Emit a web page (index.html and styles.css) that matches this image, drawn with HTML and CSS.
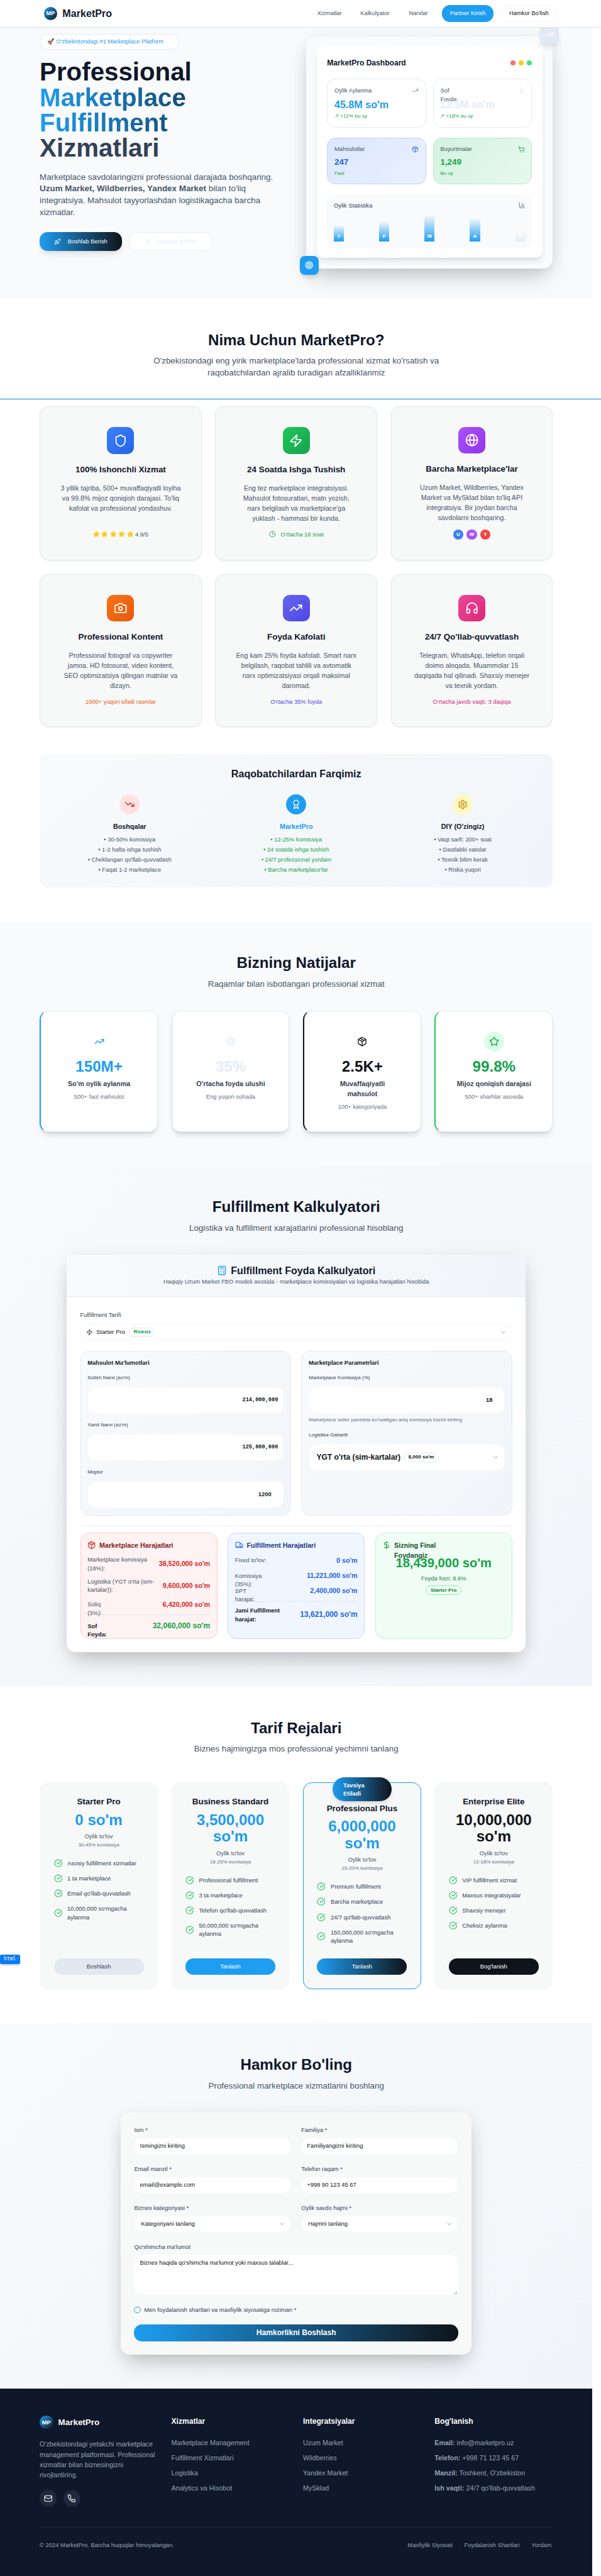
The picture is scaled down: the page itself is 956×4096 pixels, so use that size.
FILE: index.html
```html
<!DOCTYPE html>
<html lang="uz">
<head>
<meta charset="utf-8">
<title>MarketPro</title>
<link rel="stylesheet" href="styles.css">
</head>
<body>
<svg class="sprite" width="0" height="0" aria-hidden="true">
  <symbol id="rocket" viewBox="0 0 24 24"><path d="M4.5 16.5c-1.5 1.26-2 5-2 5s3.74-.5 5-2c.71-.84.7-2.13-.09-2.91a2.18 2.18 0 0 0-2.91-.09z"/><path d="m12 15-3-3a22 22 0 0 1 2-3.95A12.88 12.88 0 0 1 22 2c0 2.72-.78 7.5-6 11a22.35 22.35 0 0 1-4 2z"/><path d="M9 12H4s.55-3.03 2-4c1.62-1.08 5 0 5 0"/><path d="M12 15v5s3.03-.55 4-2c1.08-1.62 0-5 0-5"/></symbol>
  <symbol id="users" viewBox="0 0 24 24"><path d="M16 21v-2a4 4 0 0 0-4-4H6a4 4 0 0 0-4 4v2"/><circle cx="9" cy="7" r="4"/><path d="M22 21v-2a4 4 0 0 0-3-3.87"/><path d="M16 3.13a4 4 0 0 1 0 7.75"/></symbol>
  <symbol id="up" viewBox="0 0 24 24"><path d="M22 7 13.5 15.5 8.500 10.500 2 17"/><path d="M16 7h6v6"/></symbol>
  <symbol id="down" viewBox="0 0 24 24"><path d="M22 17 13.5 8.500 8.500 13.500 2 7"/><path d="M16 17h6v-6"/></symbol>
  <symbol id="dollar" viewBox="0 0 24 24"><path d="M12 2v20"/><path d="M17 5H9.500a3.500 3.500 0 0 0 0 7h5a3.500 3.500 0 0 1 0 7H6"/></symbol>
  <symbol id="box" viewBox="0 0 24 24"><path d="M11 21.730a2 2 0 0 0 2 0l7-4A2 2 0 0 0 21 16V8a2 2 0 0 0-1-1.730l-7-4a2 2 0 0 0-2 0l-7 4A2 2 0 0 0 3 8v8a2 2 0 0 0 1 1.730z"/><path d="M12 22V12"/><path d="m3.300 7 8.700 5 8.700-5"/><path d="m7.500 4.270 9 5.150"/></symbol>
  <symbol id="cart" viewBox="0 0 24 24"><circle cx="8" cy="21" r="1"/><circle cx="19" cy="21" r="1"/><path d="M2.050 2.050h2l2.660 12.420a2 2 0 0 0 2 1.580h9.780a2 2 0 0 0 1.950-1.570l1.650-7.430H5.120"/></symbol>
  <symbol id="chart" viewBox="0 0 24 24"><path d="M3 3v16a2 2 0 0 0 2 2h16"/><path d="M18 17V9"/><path d="M13 17V5"/><path d="M8 17v-3"/></symbol>
  <symbol id="target" viewBox="0 0 24 24"><circle cx="12" cy="12" r="10"/><circle cx="12" cy="12" r="6"/><circle cx="12" cy="12" r="2"/></symbol>
  <symbol id="shield" viewBox="0 0 24 24"><path d="M20 13c0 5-3.500 7.500-7.660 8.950a1 1 0 0 1-.67-.01C7.500 20.500 4 18 4 13V6a1 1 0 0 1 1-1c2 0 4.500-1.200 6.240-2.720a1.170 1.170 0 0 1 1.520 0C14.510 3.810 17 5 19 5a1 1 0 0 1 1 1z"/></symbol>
  <symbol id="zap" viewBox="0 0 24 24"><path d="M4 14a1 1 0 0 1-.78-1.630l9.900-10.200a.5.5 0 0 1 .86.460l-1.920 6.020A1 1 0 0 0 13 10h7a1 1 0 0 1 .78 1.630l-9.900 10.200a.5.5 0 0 1-.86-.460l1.920-6.020A1 1 0 0 0 11 14z"/></symbol>
  <symbol id="globe" viewBox="0 0 24 24"><circle cx="12" cy="12" r="10"/><path d="M12 2a14.500 14.500 0 0 0 0 20 14.500 14.500 0 0 0 0-20"/><path d="M2 12h20"/></symbol>
  <symbol id="camera" viewBox="0 0 24 24"><path d="M14.500 4h-5L7 7H4a2 2 0 0 0-2 2v9a2 2 0 0 0 2 2h16a2 2 0 0 0 2-2V9a2 2 0 0 0-2-2h-3l-2.500-3z"/><circle cx="12" cy="13" r="3"/></symbol>
  <symbol id="phones" viewBox="0 0 24 24"><path d="M3 14h3a2 2 0 0 1 2 2v3a2 2 0 0 1-2 2H5a2 2 0 0 1-2-2v-7a9 9 0 0 1 18 0v7a2 2 0 0 1-2 2h-1a2 2 0 0 1-2-2v-3a2 2 0 0 1 2-2h3"/></symbol>
  <symbol id="star" viewBox="0 0 24 24"><path d="M11.525 2.295a.53.53 0 0 1 .95 0l2.310 4.679a2.123 2.123 0 0 0 1.595 1.160l5.166.756a.53.53 0 0 1 .294.904l-3.736 3.638a2.123 2.123 0 0 0-.611 1.878l.882 5.140a.53.53 0 0 1-.771.560l-4.618-2.428a2.122 2.122 0 0 0-1.973 0L6.396 21.010a.53.53 0 0 1-.77-.560l.881-5.139a2.122 2.122 0 0 0-.611-1.879L2.160 9.795a.53.53 0 0 1 .294-.906l5.165-.755a2.122 2.122 0 0 0 1.597-1.160z"/></symbol>
  <symbol id="clock" viewBox="0 0 24 24"><circle cx="12" cy="12" r="10"/><path d="M12 6v6l4 2"/></symbol>
  <symbol id="award" viewBox="0 0 24 24"><path d="m15.477 12.890 1.515 8.526a.5.5 0 0 1-.81.470l-3.580-2.687a1 1 0 0 0-1.197 0l-3.586 2.686a.5.5 0 0 1-.81-.469l1.514-8.526"/><circle cx="12" cy="8" r="6"/></symbol>
  <symbol id="gear" viewBox="0 0 24 24"><path d="M12.220 2h-.44a2 2 0 0 0-2 2v.18a2 2 0 0 1-1 1.730l-.43.250a2 2 0 0 1-2 0l-.15-.08a2 2 0 0 0-2.730.730l-.22.380a2 2 0 0 0 .73 2.730l.15.100a2 2 0 0 1 1 1.720v.510a2 2 0 0 1-1 1.740l-.15.090a2 2 0 0 0-.73 2.730l.22.380a2 2 0 0 0 2.730.730l.15-.08a2 2 0 0 1 2 0l.43.250a2 2 0 0 1 1 1.730V20a2 2 0 0 0 2 2h.44a2 2 0 0 0 2-2v-.18a2 2 0 0 1 1-1.730l.43-.250a2 2 0 0 1 2 0l.15.080a2 2 0 0 0 2.730-.730l.22-.390a2 2 0 0 0-.73-2.730l-.15-.08a2 2 0 0 1-1-1.740v-.5a2 2 0 0 1 1-1.740l.15-.09a2 2 0 0 0 .73-2.730l-.22-.380a2 2 0 0 0-2.730-.730l-.15.080a2 2 0 0 1-2 0l-.43-.250a2 2 0 0 1-1-1.730V4a2 2 0 0 0-2-2z"/><circle cx="12" cy="12" r="3"/></symbol>
  <symbol id="calc" viewBox="0 0 24 24"><rect x="4" y="2" width="16" height="20" rx="2"/><path d="M8 6h8M16 14v4M16 10h.01M12 10h.01M8 10h.01M12 14h.01M8 14h.01M12 18h.01M8 18h.01"/></symbol>
  <symbol id="truck" viewBox="0 0 24 24"><path d="M14 18V6a2 2 0 0 0-2-2H4a2 2 0 0 0-2 2v11a1 1 0 0 0 1 1h2"/><path d="M15 18H9"/><path d="M19 18h2a1 1 0 0 0 1-1v-3.650a1 1 0 0 0-.22-.624l-3.480-4.350A1 1 0 0 0 17.520 8H14"/><circle cx="17" cy="18" r="2"/><circle cx="7" cy="18" r="2"/></symbol>
  <symbol id="check" viewBox="0 0 24 24"><path d="M21.801 10A10 10 0 1 1 17 3.335"/><path d="m9 11 3 3L22 4"/></symbol>
  <symbol id="chev" viewBox="0 0 24 24"><path d="m6 9 6 6 6-6"/></symbol>
  <symbol id="mail" viewBox="0 0 24 24"><rect x="2" y="4" width="20" height="16" rx="2"/><path d="m22 7-8.970 5.700a1.940 1.940 0 0 1-2.060 0L2 7"/></symbol>
  <symbol id="call" viewBox="0 0 24 24"><path d="M22 16.920v3a2 2 0 0 1-2.180 2 19.790 19.790 0 0 1-8.630-3.070 19.500 19.500 0 0 1-6-6 19.790 19.790 0 0 1-3.070-8.670A2 2 0 0 1 4.110 2h3a2 2 0 0 1 2 1.720 12.840 12.840 0 0 0 .7 2.810 2 2 0 0 1-.45 2.110L8.090 9.910a16 16 0 0 0 6 6l1.270-1.270a2 2 0 0 1 2.110-.45 12.840 12.840 0 0 0 2.810.7A2 2 0 0 1 22 16.920z"/></symbol>
</svg>
<div class="page">
  <header class="top">
    <div class="brand"><span class="mp">MP</span><b>MarketPro</b></div>
    <nav class="nav">
      <a class="n1">Xizmatlar</a><a class="n2">Kalkulyator</a><a class="n3">Narxlar</a>
      <a class="pill solid">Partner Kirish</a><a class="pill ghost">Hamkor Bo'lish</a>
    </nav>
  </header>

  <main class="main">
    <section class="hero">
      <div class="hero-copy">
        <div class="tagline">🚀 O'zbekistondagi #1 Marketplace Platform</div>
        <h1><span class="dark">Professional</span><span class="grad">Marketplace</span><span class="grad">Fulfillment</span><span class="slate">Xizmatlari</span></h1>
        <p>Marketplace savdolaringizni professional darajada boshqaring. <b>Uzum Market, Wildberries, Yandex Market</b> bilan to'liq integratsiya. Mahsulot tayyorlashdan logistikagacha barcha xizmatlar.</p>
        <div class="cta">
          <a class="cta1"><svg class="i16"><use href="#rocket"/></svg>Boshlab Berish</a>
          <a class="cta2"><svg class="i16"><use href="#users"/></svg>Hamkor Bo'lish</a>
        </div>
      </div>
      <div class="dash-wrap">
        <div class="dash">
          <div class="dash-head"><b>MarketPro Dashboard</b><span class="dots"><i class="red"></i><i class="yel"></i><i class="grn"></i></span></div>
          <div class="tiles">
            <div class="tile"><div class="tl"><span>Oylik Aylanma</span><svg class="i16 c-blue"><use href="#up"/></svg></div><div class="tv c-blue">45.8M so'm</div><div class="ts">↗ +12% bu oy</div></div>
            <div class="tile"><div class="tl"><span>Sof<br>Foyda</span><svg class="i16 c-pale"><use href="#dollar"/></svg></div><div class="tv c-pale">12.5M so'm</div><div class="ts">↗ +18% bu oy</div></div>
            <div class="tile t-blue"><div class="tl"><span>Mahsulotlar</span><svg class="i16"><use href="#box"/></svg></div><div class="tv sm">247</div><div class="ts">Faol</div></div>
            <div class="tile t-green"><div class="tl"><span>Buyurtmalar</span><svg class="i16"><use href="#cart"/></svg></div><div class="tv sm">1,249</div><div class="ts">Bu oy</div></div>
          </div>
          <div class="stat-box">
            <div class="sb-head"><span>Oylik Statistika</span><svg class="i16"><use href="#chart"/></svg></div>
            <div class="bars"><span style="height:40px">Y</span><span style="height:48px">F</span><span style="height:64px">M</span><span style="height:56px">A</span><span class="pale" style="height:20px">M</span></div>
          </div>
        </div>
        <div class="float f1"><svg class="i20"><use href="#up"/></svg></div>
        <div class="float f2"><svg class="i20"><use href="#target"/></svg></div>
      </div>
    </section>

    <section class="why">
      <h2>Nima Uchun MarketPro?</h2>
      <p class="lead">O'zbekistondagi eng yirik marketplace'larda professional xizmat ko'rsatish va raqobatchilardan ajralib turadigan afzalliklarimiz</p>
      <div class="grid3">
        <article class="feat"><div class="ico g-blue"><svg class="i32"><use href="#shield"/></svg></div><h3>100% Ishonchli Xizmat</h3><p>3 yillik tajriba, 500+ muvaffaqiyatli loyiha<br>va 99.8% mijoz qoniqish darajasi. To'liq<br>kafolat va professional yondashuv.</p><div class="foot stars"><svg class="i16"><use href="#star"/></svg><svg class="i16"><use href="#star"/></svg><svg class="i16"><use href="#star"/></svg><svg class="i16"><use href="#star"/></svg><svg class="i16"><use href="#star"/></svg><span>4.9/5</span></div></article>
        <article class="feat"><div class="ico g-green"><svg class="i32"><use href="#zap"/></svg></div><h3>24 Soatda Ishga Tushish</h3><p>Eng tez marketplace integratsiyasi.<br>Mahsulot fotosuratlari, matn yozish,<br>narx belgilash va marketplace'ga<br>yuklash - hammasi bir kunda.</p><div class="foot c-green gap12"><svg class="i16"><use href="#clock"/></svg><span>O'rtacha 18 soat</span></div></article>
        <article class="feat"><div class="ico g-purple"><svg class="i32"><use href="#globe"/></svg></div><h3>Barcha Marketplace'lar</h3><p>Uzum Market, Wildberries, Yandex<br>Market va MySklad bilan to'liq API<br>integratsiya. Bir joydan barcha<br>savdolarni boshqaring.</p><div class="foot marks"><b class="u">U</b><b class="w">W</b><b class="y">Y</b></div></article>
        <article class="feat"><div class="ico g-orange"><svg class="i32"><use href="#camera"/></svg></div><h3>Professional Kontent</h3><p>Professional fotograf va copywriter<br>jamoa. HD fotosurat, video kontent,<br>SEO optimizatsiya qilingan matnlar va<br>dizayn.</p><div class="foot c-orange">1000+ yuqori sifatli rasmlar</div></article>
        <article class="feat"><div class="ico g-indigo"><svg class="i32"><use href="#up"/></svg></div><h3>Foyda Kafolati</h3><p>Eng kam 25% foyda kafolati. Smart narx<br>belgilash, raqobat tahlili va avtomatik<br>narx optimizatsiyasi orqali maksimal<br>daromad.</p><div class="foot c-indigo">O'rtacha 35% foyda</div></article>
        <article class="feat"><div class="ico g-pink"><svg class="i32"><use href="#phones"/></svg></div><h3>24/7 Qo'llab-quvvatlash</h3><p>Telegram, WhatsApp, telefon orqali<br>doimo aloqada. Muammolar 15<br>daqiqada hal qilinadi. Shaxsiy menejer<br>va texnik yordam.</p><div class="foot c-pink">O'rtacha javob vaqti: 3 daqiqa</div></article>
      </div>
      <div class="compare">
        <h3>Raqobatchilardan Farqimiz</h3>
        <div class="cmp-grid">
          <div class="cmp"><div class="round r-red"><svg class="i24"><use href="#down"/></svg></div><h4>Boshqalar</h4><ul><li>• 30-50% komissiya</li><li>• 1-2 hafta ishga tushish</li><li>• Cheklangan qo'llab-quvvatlash</li><li>• Faqat 1-2 marketplace</li></ul></div>
          <div class="cmp us"><div class="round r-blue"><svg class="i24"><use href="#award"/></svg></div><h4>MarketPro</h4><ul><li>• 12-25% komissiya</li><li>• 24 soatda ishga tushish</li><li>• 24/7 professional yordam</li><li>• Barcha marketplace'lar</li></ul></div>
          <div class="cmp"><div class="round r-yel"><svg class="i24"><use href="#gear"/></svg></div><h4>DIY (O'zingiz)</h4><ul><li>• Vaqt sarfi: 200+ soat</li><li>• Dastlabki xatolar</li><li>• Texnik bilim kerak</li><li>• Riska yuqori</li></ul></div>
        </div>
      </div>
    </section>

    <section class="results">
      <h2>Bizning Natijalar</h2>
      <p class="lead">Raqamlar bilan isbotlangan professional xizmat</p>
      <div class="grid4">
        <div class="res b-blue"><div class="round c-blue"><svg class="i24"><use href="#up"/></svg></div><div class="num c-blue">150M+</div><div class="lab">So'm oylik aylanma</div><div class="sub">500+ faol mahsulot</div></div>
        <div class="res b-pale"><div class="round c-pale"><svg class="i24"><use href="#target"/></svg></div><div class="num c-pale">35%</div><div class="lab">O'rtacha foyda ulushi</div><div class="sub">Eng yuqori sohada</div></div>
        <div class="res b-ink"><div class="round c-ink"><svg class="i24"><use href="#box"/></svg></div><div class="num c-ink">2.5K+</div><div class="lab">Muvaffaqiyatli<br>mahsulot</div><div class="sub">100+ kategoriyada</div></div>
        <div class="res b-green"><div class="round r-green"><svg class="i24"><use href="#star"/></svg></div><div class="num c-green">99.8%</div><div class="lab">Mijoz qoniqish darajasi</div><div class="sub">500+ sharhlar asosida</div></div>
      </div>
    </section>

    <section class="calc">
      <h2>Fulfillment Kalkulyatori</h2>
      <p class="lead">Logistika va fulfillment xarajatlarini professional hisoblang</p>
      <div class="calc-card">
        <div class="calc-head"><div class="ch-title"><svg class="i24 c-blue"><use href="#calc"/></svg>Fulfillment Foyda Kalkulyatori</div><div class="ch-sub">Haqiqiy Uzum Market FBO modeli asosida - marketplace komissiyalari va logistika harajatlari hisobida</div></div>
        <div class="calc-body">
          <div class="flabel">Fulfillment Tarifi</div>
          <div class="select"><svg class="i16"><use href="#zap"/></svg><span class="sel-t">Starter Pro</span><span class="chip c-green">Risksiz</span><svg class="i16 chev"><use href="#chev"/></svg></div>
          <div class="panels">
            <div class="panel"><h4>Mahsulot Ma'lumotlari</h4>
              <div class="plab">Sotish Narxi (so'm)</div><div class="pin mono">214,000,000</div>
              <div class="plab next">Xarid Narxi (so'm)</div><div class="pin mono">125,000,000</div>
              <div class="plab next">Miqdor</div><div class="pin num-in">1200</div>
            </div>
            <div class="panel"><h4>Marketplace Parametrlari</h4>
              <div class="plab">Marketplace Komissiya (%)</div><div class="pin num-in">18</div>
              <div class="help">Marketplace seller panelida ko'rsatilgan aniq komissiya foizini kiriting</div>
              <div class="plab next">Logistika Gabariti</div><div class="pin big"><span>YGT o'rta (sim-kartalar)</span><span class="chip">8,000 so'm</span><svg class="i16 chev"><use href="#chev"/></svg></div>
            </div>
          </div>
          <div class="rule"></div>
          <div class="costs">
            <div class="cost red">
              <h4><svg class="i20"><use href="#box"/></svg>Marketplace Harajatlari</h4>
              <div class="row two"><span>Marketplace komissiya<br>(18%):</span><b>38,520,000 so'm</b></div>
              <div class="row two"><span>Logistika (YGT o'rta (sim-<br>kartalar)):</span><b>9,600,000 so'm</b></div>
              <div class="row"><span>Soliq<br>(3%):</span><b>6,420,000 so'm</b></div>
              <div class="row total"><span>Sof<br>Foyda:</span><b>32,060,000 so'm</b></div>
            </div>
            <div class="cost blue">
              <h4><svg class="i20"><use href="#truck"/></svg>Fulfillment Harajatlari</h4>
              <div class="row"><span>Fixed to'lov:</span><b>0 so'm</b></div>
              <div class="row"><span>Komissiya<br>(35%):</span><b>11,221,000 so'm</b></div>
              <div class="row"><span>SPT<br>harajat:</span><b>2,400,000 so'm</b></div>
              <div class="row total tall"><span>Jami Fulfillment<br>harajat:</span><b>13,621,000 so'm</b></div>
            </div>
            <div class="cost green">
              <h4><svg class="i20"><use href="#dollar"/></svg><span>Sizning Final<br>Foydangiz</span></h4>
              <div class="profit">18,439,000 so'm</div>
              <div class="pct">Foyda foizi: 8.6%</div>
              <div class="gchip">Starter Pro</div>
            </div>
          </div>
        </div>
      </div>
    </section>

    <section class="pricing">
      <h2>Tarif Rejalari</h2>
      <p class="lead">Biznes hajmingizga mos professional yechimni tanlang</p>
      <div class="grid4">
        <div class="plan"><h3>Starter Pro</h3><div class="price">0 so'm</div><div class="per">Oylik to'lov</div><div class="com">30-45% komissiya</div>
          <ul><li><svg class="i20"><use href="#check"/></svg>Asosiy fulfillment xizmatlar</li><li><svg class="i20"><use href="#check"/></svg>1 ta marketplace</li><li><svg class="i20"><use href="#check"/></svg>Email qo'llab-quvvatlash</li><li><svg class="i20"><use href="#check"/></svg>10,000,000 so'mgacha aylanma</li></ul><a class="btn b1">Boshlash</a></div>
        <div class="plan"><h3>Business Standard</h3><div class="price">3,500,000 so'm</div><div class="per">Oylik to'lov</div><div class="com">18-25% komissiya</div>
          <ul><li><svg class="i20"><use href="#check"/></svg>Professional fulfillment</li><li><svg class="i20"><use href="#check"/></svg>3 ta marketplace</li><li><svg class="i20"><use href="#check"/></svg>Telefon qo'llab-quvvatlash</li><li><svg class="i20"><use href="#check"/></svg>50,000,000 so'mgacha aylanma</li></ul><a class="btn b2">Tanlash</a></div>
        <div class="plan pop"><div class="ribbon">Tavsiya Etiladi</div><h3>Professional Plus</h3><div class="price">6,000,000 so'm</div><div class="per">Oylik to'lov</div><div class="com">15-20% komissiya</div>
          <ul><li><svg class="i20"><use href="#check"/></svg>Premium fulfillment</li><li><svg class="i20"><use href="#check"/></svg>Barcha marketplace</li><li><svg class="i20"><use href="#check"/></svg>24/7 qo'llab-quvvatlash</li><li><svg class="i20"><use href="#check"/></svg>150,000,000 so'mgacha aylanma</li></ul><a class="btn b3">Tanlash</a></div>
        <div class="plan"><h3>Enterprise Elite</h3><div class="price c-ink">10,000,000 so'm</div><div class="per">Oylik to'lov</div><div class="com">12-18% komissiya</div>
          <ul><li><svg class="i20"><use href="#check"/></svg>VIP fulfillment xizmat</li><li><svg class="i20"><use href="#check"/></svg>Maxsus integratsiyalar</li><li><svg class="i20"><use href="#check"/></svg>Shaxsiy menejer</li><li><svg class="i20"><use href="#check"/></svg>Cheksiz aylanma</li></ul><a class="btn b4">Bog'lanish</a></div>
      </div>
    </section>

    <section class="join">
      <h2>Hamkor Bo'ling</h2>
      <p class="lead">Professional marketplace xizmatlarini boshlang</p>
      <div class="form">
        <div class="fields">
          <div class="fld"><label>Ism *</label><div class="inp">Ismingizni kiriting</div></div>
          <div class="fld"><label>Familiya *</label><div class="inp">Familiyangizni kiriting</div></div>
          <div class="fld"><label>Email manzil *</label><div class="inp">email@example.com</div></div>
          <div class="fld"><label>Telefon raqam *</label><div class="inp">+998 90 123 45 67</div></div>
          <div class="fld"><label>Biznes kategoriyasi *</label><div class="inp sel">Kategoriyani tanlang<svg class="i16 chev"><use href="#chev"/></svg></div></div>
          <div class="fld"><label>Oylik savdo hajmi *</label><div class="inp sel">Hajmni tanlang<svg class="i16 chev"><use href="#chev"/></svg></div></div>
        </div>
        <div class="fld"><label>Qo'shimcha ma'lumot</label><div class="inp area">Biznes haqida qo'shimcha ma'lumot yoki maxsus talablar...<svg class="grip" viewBox="0 0 10 10"><path d="M1 9 9 1M5.500 9 9 5.500"/></svg></div></div>
        <div class="agree"><i></i>Men foydalanish shartlari va maxfiylik siyosatiga roziman *</div>
        <a class="submit">Hamkorlikni Boshlash</a>
      </div>
    </section>

    <footer class="footer">
      <div class="fcols">
        <div class="fabout"><div class="fbrand"><span class="mp">MP</span><b>MarketPro</b></div><p>O'zbekistondagi yetakchi marketplace<br>management platformasi. Professional<br>xizmatlar bilan biznesingizni<br>rivojlantiring.</p><div class="social"><span><svg class="i20"><use href="#mail"/></svg></span><span><svg class="i20"><use href="#call"/></svg></span></div></div>
        <div><h4>Xizmatlar</h4><ul><li>Marketplace Management</li><li>Fulfillment Xizmatlari</li><li>Logistika</li><li>Analytics va Hisobot</li></ul></div>
        <div><h4>Integratsiyalar</h4><ul><li>Uzum Market</li><li>Wildberries</li><li>Yandex Market</li><li>MySklad</li></ul></div>
        <div><h4>Bog'lanish</h4><ul><li><b>Email:</b> info@marketpro.uz</li><li><b>Telefon:</b> +998 71 123 45 67</li><li><b>Manzil:</b> Toshkent, O'zbekiston</li><li><b>Ish vaqti:</b> 24/7 qo'llab-quvvatlash</li></ul></div>
      </div>
      <div class="fbot"><span>© 2024 MarketPro. Barcha huquqlar himoyalangan.</span><nav><a>Maxfiylik Siyosati</a><a>Foydalanish Shartlari</a><a>Yordam</a></nav></div>
    </footer>
  </main>
  <div class="guide"></div>
  <div class="tag">html</div>
</div>
</body>
</html>
```
FILE: styles.css
```css
* { box-sizing: border-box; }
html, body { margin: 0; padding: 0; background: #fff; }
body { width: 956px; height: 4096px; overflow: hidden; }
h1, h2, h3, h4, p, ul { margin: 0; padding: 0; font-size: inherit; }
ul { list-style: none; }
.sprite { position: absolute; }
.page {
  zoom: 0.67125;
  position: relative;
  width: 1424px;
  height: 6103px;
  font: 16px/24px "Liberation Sans", Arial, sans-serif;
  color: #0f1419;
}
svg { fill: none; stroke: currentColor; stroke-width: 2; stroke-linecap: round; stroke-linejoin: round; flex: none; display: block; }
.i16 { width: 16px; height: 16px; }
.i20 { width: 20px; height: 20px; }
.i24 { width: 24px; height: 24px; }
.i32 { width: 32px; height: 32px; }
.c-blue { color: #1e9df1; }
.c-pale { color: #e3ecf6; }
.c-ink { color: #0f1419; }
.c-green { color: #16a34a; }
.c-orange { color: #ea580c; }
.c-indigo { color: #4f46e5; }
.c-pink { color: #db2777; }

/* header */
.top { height: 65px; width: 1425px; border-bottom: 1px solid #e1e8f0; background: #fff; box-shadow: 0 1px 3px rgba(0,0,0,.08); display: flex; align-items: center; justify-content: space-between; padding: 0 104px; position: relative; z-index: 5; }
.brand, .fbrand { display: flex; align-items: center; gap: 12px; }
.brand b { font-size: 24px; color: #0f172a; }
.mp { width: 32px; height: 32px; border-radius: 50%; background: linear-gradient(135deg, #1e9df1, #0f1419); color: #fff; font-weight: 700; font-size: 14px; display: flex; align-items: center; justify-content: center; }
.nav { display: flex; align-items: center; font-size: 14px; color: #475569; }
.n1 { margin-right: 44px; }
.n2 { margin-right: 46px; }
.n3 { margin-right: 33px; }
.pill { height: 40px; border-radius: 19px; display: flex; align-items: center; justify-content: center; }
.solid { width: 123px; background: #1e9df1; color: #fff; margin-right: 16px; }
.ghost { width: 135px; border: 1px solid #f1f4f6; color: #0f1419; }

.main { width: 1403px; }
section { padding: 80px 93px 0 94px; }
h2 { font-size: 36px; line-height: 40px; color: #0f172a; text-align: center; }
.lead { font-size: 20px; line-height: 28px; color: #475569; text-align: center; margin: 16px auto 0; width: 760px; }

/* hero */
.hero { height: 641px; background: #f8fafc; padding-top: 15px; display: flex; justify-content: space-between; overflow: hidden; }
.hero-copy { width: 584px; }
.tagline { display: flex; align-items: center; height: 38px; width: 331px; border: 1px solid #e1eaef; border-radius: 19px; background: #fff; padding-left: 16px; font-size: 14px; color: #1e9df1; white-space: pre; }
h1 { font-size: 60px; line-height: 60px; margin: 24px 0; font-weight: 700; }
h1 span { display: block; }
.dark { color: #0f172a; }
.grad { width: 584px; background: linear-gradient(90deg, #1e9df1, #0f1419); -webkit-background-clip: text; background-clip: text; color: transparent; }
.slate { color: #334155; }
.hero-copy p { font-size: 20px; line-height: 28px; color: #475569; width: 575px; }
.cta { display: flex; gap: 16px; margin-top: 32px; font-size: 14px; }
.cta a { height: 44px; border-radius: 19px; display: flex; align-items: center; justify-content: center; gap: 16px; }
.cta1 { width: 195px; color: #fff; background: linear-gradient(90deg, #1e9df1, #0f1419); box-shadow: 0 10px 15px -3px rgba(0,0,0,.1), 0 4px 6px -4px rgba(0,0,0,.1); }
.cta2 { width: 199px; background: #fff; border: 1px solid #e3ecf6; color: #e3ecf6; }
.dash-wrap { position: relative; width: 584px; height: 550px; margin-top: 6px; padding: 25px; border-radius: 24px; background: linear-gradient(135deg, #f8fafc, #fafbfd); box-shadow: 0 25px 50px -12px rgba(0,0,0,.25), 0 0 40px rgba(0,0,0,.04); }
.dash { height: 500px; border-radius: 16px; background: #fff; padding: 24px; box-shadow: 0 10px 15px -3px rgba(0,0,0,.1), 0 4px 6px -4px rgba(0,0,0,.1); }
.dash-head { display: flex; justify-content: space-between; align-items: center; height: 28px; font-size: 18px; color: #0f172a; }
.dots { display: flex; gap: 8px; }
.dots i { width: 12px; height: 12px; border-radius: 50%; }
.dots .red { background: #f87171; } .yel { background: #facc15; } .grn { background: #4ade80; }
.tiles { display: grid; grid-template-columns: 1fr 1fr; column-gap: 16px; row-gap: 24px; margin-top: 24px; }
.tile { border: 1px solid #e1eaef; border-radius: 20px; padding: 16px; background: #fff; }
.tl { display: flex; justify-content: space-between; align-items: flex-start; height: 20px; font-size: 14px; line-height: 20px; color: #475569; margin-bottom: 8px; }
.tl svg { margin-top: 2px; }
.tv { position: relative; font-size: 24px; line-height: 32px; font-weight: 700; }
.tv.sm { font-size: 20px; line-height: 28px; }
.ts { font-size: 12px; line-height: 16px; margin-top: 4px; color: #16a34a; }
.t-blue { background: linear-gradient(135deg, #dbe7fd, #eaf1fe); border-color: #bfd3fa; }
.t-blue svg, .t-blue .tv { color: #2563eb; }
.t-green { background: linear-gradient(135deg, #d3f3df, #e8f8ee); border-color: #b5ecc9; }
.t-green svg, .t-green .tv { color: #16a34a; }
.stat-box { margin-top: 24px; height: 128px; background: #f8fafc; border-radius: 20px; padding: 16px; color: #334155; }
.sb-head { display: flex; justify-content: space-between; align-items: center; font-size: 14px; line-height: 20px; }
.sb-head svg { color: #64748b; }
.bars { display: flex; justify-content: space-between; align-items: flex-end; height: 64px; margin-top: 12px; }
.bars span { width: 24px; background: linear-gradient(0deg, #1e9df1, rgba(30,157,241,0)); color: #fff; font-size: 12px; line-height: 16px; font-weight: 700; display: flex; align-items: flex-end; justify-content: center; padding-bottom: 4px; }
.bars .pale { background: linear-gradient(0deg, #e3ecf6, #f2f6fb); }
.float { position: absolute; width: 44px; height: 44px; border-radius: 12px; color: #fff; display: flex; align-items: center; justify-content: center; box-shadow: 0 10px 15px -3px rgba(0,0,0,.1), 0 4px 6px -4px rgba(0,0,0,.1); }
.f1 { right: -14px; top: -26px; background: #e1e9f4; }
.f2 { left: -15px; bottom: -15px; background: #1e9df1; }

/* why */
.why { height: 1476px; }
.grid3 { display: grid; grid-template-columns: repeat(3, 1fr); gap: 32px; margin-top: 64px; }
.feat { background: #f7f8f8; border: 1px solid #e1eaef; border-radius: 21px; padding: 48px; box-shadow: 0 1px 3px rgba(0,0,0,.07); text-align: center; height: 362px; display: flex; flex-direction: column; align-items: center; }
.feat:nth-child(-n+3) { height: 366px; }
.ico { width: 64px; height: 64px; border-radius: 16px; display: flex; align-items: center; justify-content: center; color: #fff; }
.g-blue { background: linear-gradient(135deg, #3b82f6, #2563eb); }
.g-green { background: linear-gradient(135deg, #22c55e, #16a34a); }
.g-purple { background: linear-gradient(135deg, #a855f7, #9333ea); }
.g-orange { background: linear-gradient(135deg, #f97316, #ea580c); }
.g-indigo { background: linear-gradient(135deg, #6366f1, #4f46e5); }
.g-pink { background: linear-gradient(135deg, #ec4899, #db2777); }
.feat h3 { font-size: 20px; line-height: 28px; margin: 24px 0 16px; color: #0f172a; }
.feat p { color: #475569; height: 96px; white-space: nowrap; }
.foot { margin-top: 16px; display: flex; align-items: center; justify-content: center; font-size: 14px; line-height: 20px; }
.stars { gap: 4px; color: #facc15; }
.stars svg { fill: currentColor; }
.stars span { color: #475569; }
.gap12 { gap: 12px; }
.marks { gap: 8px; }
.marks b { width: 24px; height: 24px; border-radius: 50%; color: #fff; font-size: 12px; line-height: 24px; }
.u { background: #3b82f6; } .w { background: #a855f7; } .y { background: #ef4444; }
.compare { margin-top: 64px; height: 316px; border-radius: 16px; background: linear-gradient(135deg, #f8fafc, #f1f5f9); padding: 32px; text-align: center; }
.compare h3 { font-size: 24px; line-height: 32px; color: #0f172a; }
.cmp-grid { display: grid; grid-template-columns: repeat(3, 1fr); gap: 32px; margin-top: 32px; }
.round { width: 48px; height: 48px; border-radius: 50%; margin: 0 auto 16px; display: flex; align-items: center; justify-content: center; }
.r-red { background: #fee2e2; color: #dc2626; }
.r-blue { background: #1e9df1; color: #fff; }
.r-yel { background: #fef9c3; color: #ca8a04; }
.r-green { background: #dcfce7; color: #16a34a; }
.cmp h4 { color: #0f172a; margin-bottom: 8px; }
.us h4 { color: #1e9df1; }
.cmp ul { display: grid; gap: 4px; font-size: 14px; line-height: 20px; color: #475569; }
.us ul { color: #16a34a; }

/* results */
.results { height: 578px; background: #f8fafc; }
.grid4 { display: grid; grid-template-columns: repeat(4, 1fr); gap: 32px; margin-top: 48px; }
.res { height: 287px; background: #fff; border: 1px solid #e1eaef; border-left-width: 3px; border-radius: 21px; padding: 48px 30px 0; text-align: center; box-shadow: 0 10px 15px -3px rgba(0,0,0,.1), 0 4px 6px -4px rgba(0,0,0,.1); }
.b-blue { border-left-color: #1e9df1; } .b-pale { border-left-color: #e3ecf6; } .b-ink { border-left-color: #0f1419; } .b-green { border-left-color: #22c55e; }
.num { font-size: 36px; line-height: 40px; font-weight: 700; }
.lab { font-weight: 700; color: #334155; margin: 8px 0; }
.sub { font-size: 14px; line-height: 20px; color: #64748b; }

/* calculator */
.calc { height: 1234px; background: linear-gradient(135deg, #f8fafc, #f1f5f9); }
.calc-card { width: 1088px; height: 942px; margin: 48px auto 0; background: #fff; border-radius: 0 0 21px 21px; box-shadow: 0 25px 50px -12px rgba(0,0,0,.25), 0 0 40px rgba(0,0,0,.04); }
.calc-head { height: 100px; border-bottom: 1px solid #e1eaef; background: linear-gradient(90deg, #f8fafc, #f1f5f9); padding-top: 25px; text-align: center; }
.ch-title { display: flex; align-items: center; justify-content: center; gap: 9px; font-size: 24px; line-height: 24px; font-weight: 700; color: #0f172a; }
.ch-sub { font-size: 14px; line-height: 20px; margin-top: 5px; color: #475569; }
.calc-body { padding: 32px; }
.flabel { font-size: 14px; color: #334155; margin-bottom: 8px; }
.select { height: 40px; border: 1px solid #f3f6f8; border-radius: 19px; display: flex; align-items: center; padding: 0 12px; font-size: 14px; }
.sel-t { margin: 0 9px 0 9px; }
.chip { display: inline-flex; align-items: center; height: 22px; border: 1px solid #e1eaef; border-radius: 11px; padding: 0 10px; font-size: 12px; line-height: 16px; font-weight: 700; }
.select .chip { padding: 0 8px 0 10px; }
.chev { color: #0f1419; opacity: .5; margin-left: auto; }
.panels { display: grid; grid-template-columns: 1fr 1fr; gap: 24px; margin-top: 24px; }
.panel { height: 390px; border: 1px solid #e1eaef; border-radius: 21px; background: linear-gradient(135deg, #f8fafc, #f1f5f9); padding: 16px; }
.panel h4 { font-size: 14px; line-height: 20px; color: #0f172a; margin-bottom: 15px; }
.plab { font-size: 12px; color: #334155; margin-bottom: 8px; }
.next { margin-top: 16px; }
.pin { height: 64px; background: #fff; border: 1px solid #f5f8fa; border-radius: 19px; display: flex; align-items: center; justify-content: flex-end; font-size: 14px; font-weight: 700; padding: 0 12px; }
.mono { font-family: "Liberation Mono", "DejaVu Sans Mono", monospace; font-size: 12.85px; }
.num-in { padding-right: 28px; }
.help { font-size: 12px; line-height: 16px; color: #64748b; margin-top: 8px; }
.big { justify-content: flex-start; gap: 7px; font-size: 18px; padding-left: 17px; }
.rule { height: 1px; background: #e1eaef; margin: 24px 0 16px; }
.costs { display: grid; grid-template-columns: repeat(3, 1fr); gap: 24px; }
.cost { height: 251px; border: 1px solid; border-radius: 21px; padding: 16px; }
.cost.red { background: #fef2f2; border-color: #fecaca; }
.cost.blue { background: #eff6ff; border-color: #bfdbfe; }
.cost.green { background: #f0fdf4; border-color: #bbf7d0; }
.cost h4 { display: flex; gap: 8px; height: 24px; margin-bottom: 12px; }
.cost h4 svg { margin-top: 2px; }
.red h4 { color: #7f1d1d; } .red h4 svg { color: #dc2626; }
.blue h4 { color: #1e3a8a; } .blue h4 svg { color: #2563eb; }
.green h4 { color: #14532d; } .green h4 svg { color: #16a34a; }
.row { display: flex; justify-content: space-between; align-items: center; height: 24px; margin-bottom: 12px; }
.row span { font-size: 14px; line-height: 20px; height: 20px; color: #475569; white-space: nowrap; }
.row b { white-space: nowrap; }
.two, .two span { height: 40px; }
.red b { color: #dc2626; } .blue b { color: #2563eb; }
.total { border-top: 1px solid #e1eaef; padding-top: 12px; height: 41px; margin: 0; }
.total span { color: #0f172a; font-weight: 700; }
.total b { font-size: 18px; line-height: 28px; }
.red .total b { color: #16a34a; }
.tall { height: 53px; }
.tall span { height: 40px; }
.profit { position: relative; font-size: 30px; line-height: 36px; font-weight: 700; color: #16a34a; text-align: center; }
.pct { font-size: 14px; line-height: 20px; color: #15803d; text-align: center; margin: 8px 0; }
.gchip { width: 85px; height: 22px; margin: 0 auto; border: 1px solid #86efac; border-radius: 11px; font-size: 12px; line-height: 20px; font-weight: 700; color: #15803d; text-align: center; }

/* pricing */
.pricing { height: 798px; }
.pricing .grid4 { margin-top: 64px; }
.plan { position: relative; height: 490px; border: 1px solid #f4f6f7; border-radius: 21px; background: #f7f8f8; padding: 32px; text-align: center; display: flex; flex-direction: column; }
.pop { border-color: #1e9df1; padding-top: 48px; }
.plan h3 { font-size: 20px; line-height: 28px; color: #0f172a; margin: 0 -10px; }
.price { font-size: 36px; line-height: 40px; font-weight: 700; color: #1e9df1; margin: 8px -10px; }
.price.c-ink { color: #0f1419; }
.per { font-size: 14px; line-height: 20px; color: #475569; }
.com { font-size: 12px; line-height: 16px; color: #64748b; margin: 4px 0 24px; }
.plan ul { display: grid; gap: 16px; font-size: 14px; line-height: 20px; color: #334155; text-align: left; }
.plan li { display: flex; align-items: center; gap: 12px; }
.plan li svg { color: #22c55e; }
.ribbon { position: absolute; left: 69px; top: -13px; width: 140px; height: 56px; border-radius: 28px; padding: 8px 40px 8px 25px; text-align: left; font-size: 14px; line-height: 20px; font-weight: 700; color: #fff; background: linear-gradient(90deg, #1e9df1, #0f1419); box-shadow: 0 10px 15px -3px rgba(0,0,0,.1), 0 4px 6px -4px rgba(0,0,0,.1); }
.btn { height: 40px; border-radius: 19px; display: flex; align-items: center; justify-content: center; font-size: 14px; color: #fff; margin-top: auto; }
.b1 { background: #e2e8f0; color: #334155; }
.b2 { background: #1e9df1; }
.b3 { background: linear-gradient(90deg, #1e9df1, #0f1419); }
.b4 { background: #0f1419; }

/* partner form */
.join { height: 866px; background: linear-gradient(135deg, #f8fafc, #f1f5f9); }
.form { width: 832px; height: 574px; margin: 48px auto 0; border-radius: 21px; background: #f7f8f8; padding: 32px; box-shadow: 0 25px 50px -12px rgba(0,0,0,.25), 0 0 40px rgba(0,0,0,.04); }
.fields { display: grid; grid-template-columns: 1fr 1fr; gap: 24px; margin-bottom: 24px; }
.fld label { display: block; font-size: 14px; line-height: 20px; color: #334155; margin-bottom: 8px; }
.inp { height: 40px; border: 1px solid #f7f9fa; border-radius: 19px; background: #fff; display: flex; align-items: center; padding: 0 12px; font-size: 14px; }
.sel { padding-left: 15px; }
.area { height: 98px; align-items: flex-start; padding-top: 8px; line-height: 20px; position: relative; }
.grip { position: absolute; right: 1px; bottom: 1px; width: 8px; height: 8px; stroke-width: 1; color: #555; }
.agree { display: flex; align-items: center; gap: 8px; font-size: 14px; line-height: 20px; color: #334155; margin: 24px 0; }
.agree i { width: 16px; height: 16px; border: 1px solid #1e9df1; border-radius: 50%; }
.submit { height: 40px; border-radius: 19px; display: flex; align-items: center; justify-content: center; font-size: 18px; font-weight: 700; color: #fff; background: linear-gradient(90deg, #1e9df1, #0f1419); }

/* footer */
.footer { height: 446px; background: #0f172a; padding: 64px 93px 0 94px; color: #94a3b8; }
.fcols { display: grid; grid-template-columns: repeat(4, 1fr); gap: 32px; height: 265px; border-bottom: 1px solid #1e293b; margin-bottom: 32px; }
.fbrand b { font-size: 20px; color: #fff; }
.fabout p { margin: 24px 0; height: 96px; white-space: nowrap; }
.social { display: flex; gap: 16px; }
.social span { width: 40px; height: 40px; border-radius: 50%; background: #1e293b; color: #fff; display: flex; align-items: center; justify-content: center; }
.footer h4 { font-size: 18px; line-height: 28px; color: #fff; margin-bottom: 24px; }
.footer ul { display: grid; gap: 12px; align-content: start; }
.fbot { display: flex; justify-content: space-between; font-size: 14px; line-height: 20px; }
.fbot nav { display: flex; gap: 28px; padding-right: 3px; }

/* inspector overlay */
.guide { position: absolute; left: 0; top: 944px; width: 1425px; height: 1px; background: #1a80e5; }
.tag { position: absolute; left: 0; top: 4630px; width: 47px; height: 22px; border-radius: 4px; background: #0a7cf5; color: #fff; font: 12px/22px "DejaVu Sans Mono", monospace; text-align: center; box-shadow: 0 2px 4px rgba(0,0,0,.2); }
```
